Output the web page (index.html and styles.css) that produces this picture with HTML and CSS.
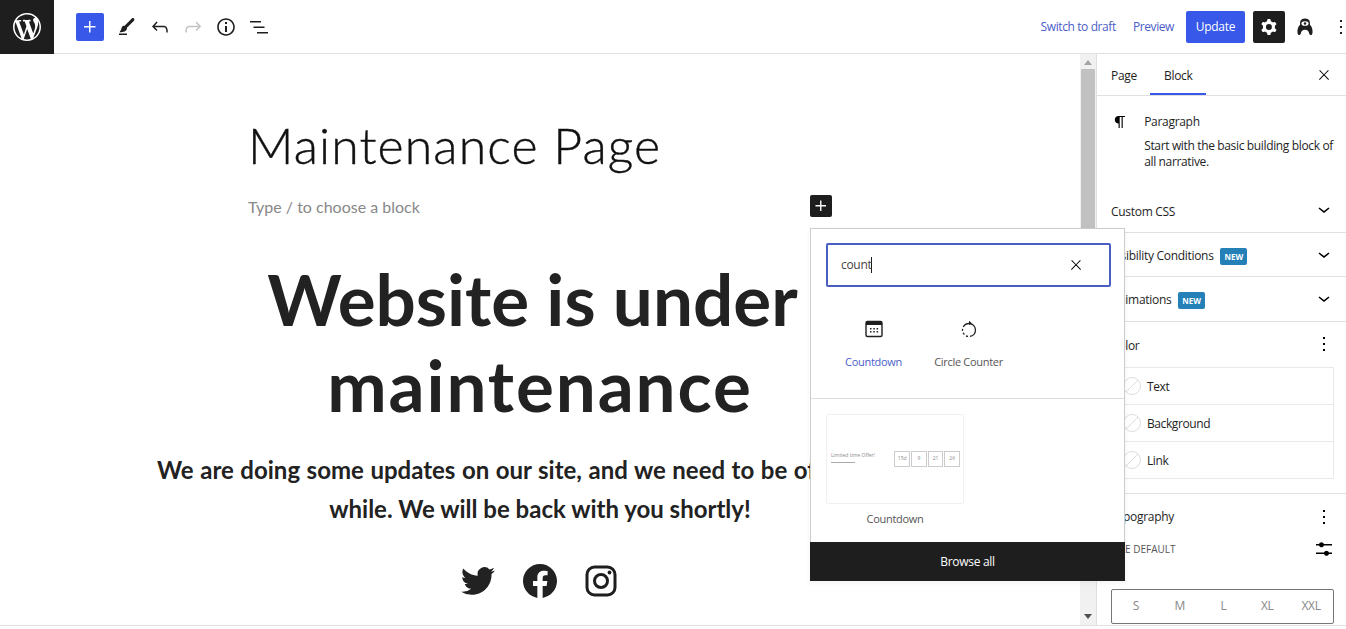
FILE: index.html
```html
<!DOCTYPE html>
<html lang="en">
<head>
    <meta charset="UTF-8">
    <meta name="viewport" content="width=device-width, initial-scale=1.0">
    <title>Edit Page - Maintenance Page</title>
    <link rel="stylesheet" href="styles.css">
</head>
<body>
    <div class="app">
        <header class="topbar">
            <div class="wp-logo">
                <svg width="28" height="28" viewBox="0 0 20 20"><path fill="#fff" d="M20 10c0-5.51-4.49-10-10-10C4.48 0 0 4.49 0 10c0 5.52 4.48 10 10 10 5.51 0 10-4.48 10-10zM7.78 15.37L4.37 6.22c.55-.02 1.17-.08 1.17-.08.5-.06.44-1.13-.06-1.11 0 0-1.45.11-2.37.11-.18 0-.37 0-.58-.01C4.12 2.69 6.87 1.11 10 1.11c2.33 0 4.45.87 6.05 2.34-.68-.11-1.65.39-1.65 1.58 0 .74.45 1.36.9 2.1.35.61.55 1.36.55 2.46 0 1.49-1.4 5-1.4 5l-3.03-8.37c.54-.02.82-.17.82-.17.5-.05.44-1.25-.06-1.22 0 0-1.44.12-2.38.12-.87 0-2.33-.12-2.33-.12-.5-.03-.56 1.2-.06 1.22l.92.08 1.26 3.41zM17.41 10c.24-.64.74-1.87.43-4.25.7 1.29 1.05 2.71 1.05 4.25 0 3.29-1.73 6.24-4.4 7.78.97-2.59 1.94-5.2 2.92-7.78zM6.1 18.09C3.12 16.65 1.11 13.53 1.11 10c0-1.3.23-2.48.72-3.59C3.25 10.3 4.67 14.2 6.1 18.09zm4.03-6.63l2.58 6.98c-.86.29-1.76.45-2.71.45-.79 0-1.57-.11-2.29-.33.81-2.38 1.62-4.74 2.42-7.1z"/></svg>
            </div>
            <div class="tools">
                <button class="add-btn">
                    <svg width="24" height="24" viewBox="0 0 24 24"><path fill="#fff" d="M11 12.5V17.5H12.5V12.5H17.5V11H12.5V6H11V11H6V12.5H11Z"/></svg>
                </button>
                <svg class="tool" width="24" height="24" viewBox="0 0 24 24"><path d="M4 20h8v-1.5H4V20zM18.9 3.5c-.6-.6-1.5-.6-2.1 0l-7.2 7.2c-.4-.1-.7 0-1.1.1-.5.2-1.5.7-1.9 2.2-.4 1.7-.8 2.2-1.1 2.7-.1.1-.2.3-.3.4l-.6 1.1H6c2 0 3.4-.4 4.7-1.4.8-.6 1.2-1.4 1.3-2.3 0-.3 0-.5-.1-.7L19 5.7c.5-.6.5-1.6-.1-2.2z"/></svg>
                <svg class="tool" width="24" height="24" viewBox="0 0 24 24"><path d="M18.3 11.7c-.6-.6-1.4-.9-2.3-.9H6.7l2.9-3.3-1.1-1-4.5 5L8.5 16l1-1-2.7-2.7H16c.5 0 .9.2 1.3.5 1 1 1 3.4 1 4.5v.3h1.5v-.2c0-1.5 0-4.3-1.5-5.7z"/></svg>
                <svg class="tool disabled" width="24" height="24" viewBox="0 0 24 24"><path d="M15.6 6.5l-1.1 1 2.9 3.3H8c-.9 0-1.7.3-2.3.9-1.4 1.5-1.4 4.2-1.4 5.6v.2h1.5v-.3c0-1.1 0-3.5 1-4.5.3-.3.7-.5 1.3-.5h9.2L14.5 15l1.1 1.1 4.6-4.6-4.6-5z"/></svg>
                <svg class="tool" width="24" height="24" viewBox="0 0 24 24"><path d="M12 3.2c-4.8 0-8.8 3.9-8.8 8.8 0 4.8 3.9 8.8 8.8 8.8 4.8 0 8.8-3.9 8.8-8.8 0-4.8-4-8.8-8.8-8.8zm0 16c-4 0-7.2-3.3-7.2-7.2C4.8 8 8 4.8 12 4.8s7.2 3.3 7.2 7.2c0 4-3.2 7.2-7.2 7.2zM11 17h2v-6h-2v6zm0-8h2V7h-2v2z"/></svg>
                <svg class="tool" width="24" height="24" viewBox="0 0 24 24"><path d="M3 6h11v1.5H3V6zm3.5 5.5h11V13h-11v-1.5zM21 17H10v1.5h11V17z"/></svg>
            </div>
            <div class="actions">
                <a class="link-btn">Switch to draft</a>
                <a class="link-btn">Preview</a>
                <button class="update-btn">Update</button>
                <button class="settings-btn">
                    <svg width="24" height="24" viewBox="0 0 24 24"><path fill="#fff" fill-rule="evenodd" d="M10.289 4.836A1 1 0 0111.275 4h1.306a1 1 0 01.987.836l.244 1.466c.787.26 1.503.679 2.108 1.218l1.393-.522a1 1 0 011.216.437l.653 1.13a1 1 0 01-.23 1.273l-1.148.944a6.025 6.025 0 010 2.435l1.149.946a1 1 0 01.23 1.272l-.653 1.13a1 1 0 01-1.216.437l-1.394-.522c-.605.54-1.32.958-2.108 1.218l-.244 1.466a1 1 0 01-.987.836h-1.306a1 1 0 01-.986-.836l-.244-1.466a5.995 5.995 0 01-2.108-1.218l-1.394.522a1 1 0 01-1.217-.436l-.653-1.131a1 1 0 01.23-1.272l1.149-.946a6.026 6.026 0 010-2.435l-1.148-.944a1 1 0 01-.23-1.272l.653-1.131a1 1 0 011.217-.437l1.393.522a5.994 5.994 0 012.108-1.218l.244-1.466zM14.929 12a3 3 0 11-6 0 3 3 0 016 0z"/></svg>
                </button>
                <svg class="avatar" width="16" height="18" viewBox="0 0 18 20">
                    <path fill="#1e1e1e" d="M3.500 7.500V5C3.500 2 6 .5 9 .5s5.500 1.500 5.500 4.500v2.500c2 1.500 3 4.500 3 8 0 2-.8 3.500-2 3.500s-1.800-1-2-2.500c-.2-2-1.800-3.500-4.500-3.500s-4.300 1.500-4.500 3.500c-.2 1.500-.8 2.500-2 2.500s-2-1.500-2-3.500c0-3.500 1-6.500 3-8z"/>
                    <ellipse cx="9" cy="6" rx="4" ry="2.600" fill="#fff"/>
                    <circle cx="9" cy="6" r="1.400" fill="#1e1e1e"/>
                </svg>
                <svg class="tool more" width="24" height="24" viewBox="0 0 24 24"><path d="M13 19h-2v-2h2v2zm0-6h-2v-2h2v2zm0-6h-2V5h2v2z"/></svg>
            </div>
        </header>

        <div class="main">
            <section class="canvas">
                <h1 class="page-title">Maintenance Page</h1>
                <p class="placeholder">Type / to choose a block</p>
                <h2 class="hero">
                    <span class="hero-first">Website is under</span>
                    <span class="hero-second">maintenance</span>
                </h2>
                <p class="lead">We are doing some updates on our site, and we need to be offline for a while. We will be back with you shortly!</p>
                <div class="social">
                    <svg width="34" height="34" viewBox="0 0 24 24"><path d="M23.953 4.570a10 10 0 01-2.825.775 4.958 4.958 0 002.163-2.723c-.951.555-2.005.959-3.127 1.184a4.920 4.920 0 00-8.384 4.482C7.690 8.095 4.067 6.130 1.640 3.162a4.822 4.822 0 00-.666 2.475c0 1.710.870 3.213 2.188 4.096a4.904 4.904 0 01-2.228-.616v.060a4.923 4.923 0 003.946 4.827 4.996 4.996 0 01-2.212.085 4.936 4.936 0 004.604 3.417 9.867 9.867 0 01-6.102 2.105c-.390 0-.779-.023-1.170-.067a13.995 13.995 0 007.557 2.209c9.053 0 13.998-7.496 13.998-13.985 0-.210 0-.420-.015-.630A9.935 9.935 0 0024 4.590z"/></svg>
                    <svg width="34" height="34" viewBox="0 0 24 24"><path d="M24 12.073c0-6.627-5.373-12-12-12s-12 5.373-12 12c0 5.990 4.388 10.954 10.125 11.854v-8.385H7.078v-3.470h3.047V9.430c0-3.007 1.792-4.669 4.533-4.669 1.312 0 2.686.235 2.686.235v2.953H15.830c-1.491 0-1.956.925-1.956 1.874v2.250h3.328l-.532 3.470h-2.796v8.385C19.612 23.027 24 18.062 24 12.073z"/></svg>
                    <svg width="32" height="32" viewBox="0 0 32 32"><rect x="2" y="2" width="28" height="28" rx="7.500" fill="none" stroke="#1e1e1e" stroke-width="3"/><circle cx="16" cy="16" r="6.500" fill="none" stroke="#1e1e1e" stroke-width="3"/><circle cx="24.500" cy="7.500" r="1.900" fill="#1e1e1e"/></svg>
                </div>
            </section>

            <div class="scrollbar">
                <span class="arrow-up"></span>
                <div class="scroll-thumb"></div>
                <span class="arrow-down"></span>
            </div>

            <aside class="sidebar">
                <div class="tabs">
                    <span class="tab">Page</span>
                    <span class="tab active">Block</span>
                    <svg class="tabs-close" width="16" height="16" viewBox="0 0 24 24"><path d="M13 11.800l6.100-6.300-1-1-6.100 6.200-6.100-6.200-1 1 6.100 6.300-6.500 6.700 1 1 6.500-6.600 6.500 6.600 1-1z"/></svg>
                </div>
                <div class="block-card">
                    <svg width="24" height="24" viewBox="0 0 24 24"><path d="m9.996 14v-.225l.004.000v6.225h1.500v-14.500h2.500v14.500h1.500v-14.500h3v-1.500h-8.504c-2.761 0-5 2.239-5 5 0 2.761 2.239 5 5 5z"/></svg>
                    <div>
                        <div class="block-name">Paragraph</div>
                        <p class="block-desc">Start with the basic building block of all narrative.</p>
                    </div>
                </div>
                <div class="panel-row">
                    <span>Custom CSS</span>
                    <svg class="chev" width="24" height="24" viewBox="0 0 24 24"><path d="M17.500 9.600L12 14l-5.500-4.400.9-1.200L12 12l4.500-3.600 1 1.200z"/></svg>
                </div>
                <div class="panel-row">
                    <span>Visibility Conditions <em class="badge">NEW</em></span>
                    <svg class="chev" width="24" height="24" viewBox="0 0 24 24"><path d="M17.500 9.600L12 14l-5.500-4.400.9-1.200L12 12l4.500-3.600 1 1.200z"/></svg>
                </div>
                <div class="panel-row">
                    <span>Animations <em class="badge">NEW</em></span>
                    <svg class="chev" width="24" height="24" viewBox="0 0 24 24"><path d="M17.500 9.600L12 14l-5.500-4.400.9-1.200L12 12l4.500-3.600 1 1.200z"/></svg>
                </div>
                <div class="panel color-panel">
                    <div class="panel-head">
                        <span>Color</span>
                        <svg width="24" height="24" viewBox="0 0 24 24"><path d="M13 19h-2v-2h2v2zm0-6h-2v-2h2v2zm0-6h-2V5h2v2z"/></svg>
                    </div>
                    <div class="color-list">
                        <div class="color-item"><span class="swatch"></span>Text</div>
                        <div class="color-item"><span class="swatch"></span>Background</div>
                        <div class="color-item"><span class="swatch"></span>Link</div>
                    </div>
                </div>
                <div class="panel type-panel">
                    <div class="panel-head">
                        <span>Typography</span>
                        <svg width="24" height="24" viewBox="0 0 24 24"><path d="M13 19h-2v-2h2v2zm0-6h-2v-2h2v2zm0-6h-2V5h2v2z"/></svg>
                    </div>
                    <div class="size-head">
                        <span>SIZE DEFAULT</span>
                        <svg width="24" height="24" viewBox="0 0 24 24"><path d="M14.500 13.800c-1.100 0-2.100.7-2.400 1.800H4V17h8.100c.3 1 1.300 1.800 2.400 1.800s2.100-.7 2.400-1.800H20v-1.500h-3.100c-.3-1-1.300-1.700-2.400-1.700zM11.900 7c-.3-1-1.300-1.800-2.400-1.800S7.400 6 7.100 7H4v1.500h3.100c.3 1 1.300 1.800 2.400 1.800s2.100-.7 2.400-1.800H20V7h-8.100z"/></svg>
                    </div>
                    <div class="size-picker">
                        <span>S</span><span>M</span><span>L</span><span>XL</span><span>XXL</span>
                    </div>
                </div>
            </aside>

            <button class="inline-add">
                <svg width="22" height="22" viewBox="0 0 24 24"><path fill="#fff" d="M11 12.500V17.500H12.500V12.500H17.500V11H12.500V6H11V11H6V12.500H11Z"/></svg>
            </button>

            <div class="inserter">
                <div class="search-wrap">
                    <div class="search-box">
                        <span class="search-text">count</span>
                        <svg width="16" height="16" viewBox="0 0 24 24"><path d="M13 11.800l6.100-6.300-1-1-6.100 6.200-6.100-6.200-1 1 6.100 6.300-6.500 6.700 1 1 6.500-6.600 6.500 6.600 1-1z"/></svg>
                    </div>
                </div>
                <div class="results">
                    <div class="result selected">
                        <svg width="20" height="20" viewBox="0 0 20 20">
                            <rect x="2" y="2.500" width="16" height="15" rx="1.500" fill="none" stroke="#1e1e1e" stroke-width="1.400"/>
                            <rect x="2" y="2.500" width="16" height="3.500" fill="#1e1e1e"/>
                            <path d="M6 9h1.500v1.500H6zM9.300 9h1.500v1.500H9.300zM12.600 9h1.500v1.500h-1.500zM6 12h1.500v1.500H6zM9.300 12h1.500v1.500H9.300zM12.600 12h1.500v1.500h-1.500z" fill="#1e1e1e"/>
                        </svg>
                        <span>Countdown</span>
                    </div>
                    <div class="result">
                        <svg width="20" height="20" viewBox="0 0 20 20">
                            <circle cx="10" cy="11" r="6.500" fill="none" stroke="#1e1e1e" stroke-width="1.300" stroke-dasharray="9 2 2 2 2 2 2 2 18"/>
                            <path d="M10 1.800l2.600 2.200-2.600 2.200z" fill="#1e1e1e"/>
                        </svg>
                        <span>Circle Counter</span>
                    </div>
                </div>
                <div class="patterns">
                    <div class="pattern-thumb">
                        <div class="thumb-offer">
                            <span>Limited time Offer!</span>
                            <i></i>
                        </div>
                        <div class="thumb-cell">15d</div>
                        <div class="thumb-cell">9</div>
                        <div class="thumb-cell">21</div>
                        <div class="thumb-cell">26</div>
                    </div>
                    <div class="pattern-name">Countdown</div>
                </div>
                <div class="browse-all">Browse all</div>
            </div>
        </div>
    </div>
</body>
</html>
```

FILE: styles.css
```css
* {
    box-sizing: border-box;
}

html, body {
    height: 100%;
}

body {
    margin: 0;
    overflow: hidden;
    background: #fff;
    color: #1e1e1e;
    font-family: "Open Sans", "Noto Sans", sans-serif;
    font-size: 12px;
    letter-spacing: -0.3px;
}

button {
    border: none;
    padding: 0;
    font-family: inherit;
    letter-spacing: inherit;
}

.app {
    height: 626px;
    display: flex;
    flex-direction: column;
    border-bottom: 1px solid #e0e0e0;
}

/* top bar */
.topbar {
    height: 54px;
    flex: none;
    display: flex;
    align-items: center;
    border-bottom: 1px solid #e0e0e0;
}

.wp-logo {
    width: 54px;
    height: 54px;
    background: #1e1e1e;
    display: flex;
    align-items: center;
    justify-content: center;
}

.tools {
    display: flex;
    align-items: center;
    gap: 9px;
    margin-left: 22px;
}

.add-btn {
    width: 28px;
    height: 28px;
    background: #3858e9;
    border-radius: 2px;
    display: flex;
    align-items: center;
    justify-content: center;
    margin-right: 2px;
}

.tool {
    fill: #1e1e1e;
    display: block;
}

.tool.disabled {
    fill: #c4c4c4;
}

.actions {
    margin-left: auto;
    display: flex;
    align-items: center;
}

.link-btn {
    color: #4a5dc9;
    letter-spacing: -0.4px;
    margin-right: 17px;
}

.link-btn + .link-btn {
    margin-right: 12px;
}

.update-btn {
    width: 59px;
    height: 32px;
    background: #3858e9;
    color: #fff;
    border-radius: 2px;
    font-size: 12px;
    margin-right: 8px;
}

.settings-btn {
    width: 32px;
    height: 32px;
    background: #1e1e1e;
    border-radius: 2px;
    display: flex;
    align-items: center;
    justify-content: center;
}

.avatar {
    margin-left: 12px;
}

.more {
    margin-left: 16px;
    margin-right: -7px;
}

/* main area */
.main {
    flex: 1;
    display: flex;
    position: relative;
    min-height: 0;
}

.canvas {
    flex: 1;
    min-width: 0;
    overflow: hidden;
    text-align: center;
    font-family: "Lato", sans-serif;
    letter-spacing: 0;
    color: #222;
}

.page-title {
    margin: 58px 0 0 248px;
    font-size: 50px;
    line-height: 66px;
    font-weight: 300;
    letter-spacing: 1.1px;
    -webkit-text-stroke: 0.4px #111;
    text-align: left;
    color: #111;
}

.placeholder {
    margin: 17px 0 0 248px;
    font-size: 16px;
    line-height: 24px;
    text-align: left;
    color: #888;
}

.hero {
    margin: 37px auto 0;
    width: 600px;
    font-size: 71px;
    line-height: 86px;
    font-weight: 700;
}

.hero-first,
.hero-second {
    display: block;
}

.hero-first {
    margin-left: -15px;
}

.hero-second {
    letter-spacing: 1.9px;
}

.lead {
    margin: 22px auto 0;
    width: 780px;
    font-size: 24px;
    line-height: 39px;
    font-weight: 700;
    text-indent: -5px;
}

.lead::first-line {
    word-spacing: 0.7px;
}

.social {
    margin-top: 36px;
    padding-right: 2px;
    display: flex;
    justify-content: center;
    align-items: center;
    gap: 28px;
}

.social svg {
    fill: #222;
}

.scrollbar {
    width: 16px;
    flex: none;
    background: #f1f1f1;
    display: flex;
    flex-direction: column;
    align-items: center;
    justify-content: space-between;
    padding: 6px 0;
}

.scroll-thumb {
    flex: 1;
    width: 14px;
    margin: 4px 0 40px;
    background: #c1c1c1;
}

.arrow-up {
    border: 4px solid transparent;
    border-top: none;
    border-bottom: 5px solid #a3a3a3;
}

.arrow-down {
    border: 4px solid transparent;
    border-bottom: none;
    border-top: 5px solid #505050;
}

/* sidebar */
.sidebar {
    width: 250px;
    flex: none;
    border-left: 1px solid #e0e0e0;
    overflow: hidden;
}

.tabs {
    height: 42px;
    display: flex;
    align-items: stretch;
    padding: 1px 0 0 14px;
    border-bottom: 1px solid #e0e0e0;
}

.tab {
    display: flex;
    align-items: center;
    margin-right: 27px;
    padding: 0;
}

.tab.active {
    margin-left: -14px;
    padding: 0 13px 0 14px;
    box-shadow: inset 0 -2px 0 #3858e9;
}

.tabs-close {
    margin: auto 14px auto auto;
}

.block-card {
    height: 92px;
    display: flex;
    gap: 15px;
    padding: 14px 8px 0 14px;
}

.block-name {
    font-weight: 500;
    line-height: 24px;
}

.block-desc {
    margin: 4px 0 0;
    line-height: 16px;
    letter-spacing: -0.35px;
}

.panel-row {
    height: 44.5px;
    display: flex;
    align-items: center;
    justify-content: space-between;
    padding: 3px 10px 0 14px;
    border-bottom: 1px solid #e0e0e0;
    font-weight: 500;
}

.badge {
    display: inline-block;
    margin-left: 4px;
    padding: 0 4px;
    background: #2580b8;
    color: #fff;
    border-radius: 2px;
    font-size: 8px;
    font-style: normal;
    font-weight: 700;
    letter-spacing: 0;
    line-height: 17px;
    vertical-align: 0;
}

.panel {
    padding: 0 12px 0 14px;
    border-bottom: 1px solid #e0e0e0;
}

.panel-head {
    height: 45px;
    display: flex;
    align-items: center;
    justify-content: space-between;
    font-weight: 500;
    margin-right: -2px;
}

.color-panel .panel-head span {
    margin-top: 2px;
}

.color-panel {
    height: 172px;
}

.color-list {
    height: 112px;
    display: flex;
    flex-direction: column;
    border: 1px solid #e9e9e9;
}

.color-item {
    flex: 1;
    display: flex;
    align-items: center;
    gap: 6px;
    padding: 2px 0 0 11px;
    border-bottom: 1px solid #e9e9e9;
    letter-spacing: -0.4px;
}

.color-item:last-child {
    border-bottom: none;
}

.swatch {
    width: 18px;
    height: 18px;
    margin-top: -2px;
    border-radius: 50%;
    border: 1px solid #ddd;
    background: linear-gradient(-45deg, transparent 47%, #ddd 47%, #ddd 53%, transparent 53%);
}

.type-panel {
    border-bottom: none;
}

.type-panel .panel-head {
    height: 48px;
    padding-bottom: 2px;
}

.size-head {
    height: 16px;
    margin: 0 -2px 0 0;
    padding-bottom: 2px;
    display: flex;
    align-items: center;
    justify-content: space-between;
    font-size: 10px;
    letter-spacing: 0;
    color: #555;
}

.size-picker {
    margin-top: 31.5px;
    height: 35px;
    padding: 0 0 2px 2px;
    display: flex;
    align-items: center;
    border: 1px solid #757575;
    border-radius: 2px;
    color: #8a8a8a;
}

.size-picker span {
    flex: 1;
    text-align: center;
}

/* block inserter popover */
.inline-add {
    position: absolute;
    left: 810px;
    top: 141px;
    width: 22px;
    height: 22px;
    background: #1e1e1e;
    border-radius: 2px;
}

.inline-add svg {
    display: block;
}

.inserter {
    position: absolute;
    left: 810px;
    top: 174px;
    width: 315px;
    height: 353px;
    background: #fff;
    border: 1px solid #ccc;
    border-bottom: none;
    box-shadow: 0 2px 6px rgba(0, 0, 0, 0.05);
    display: flex;
    flex-direction: column;
}

.search-wrap {
    padding: 14px 13px 0 15px;
}

.search-box {
    height: 44px;
    display: flex;
    align-items: center;
    justify-content: space-between;
    padding: 0 25px 0 13px;
    border: 2px solid #4a5dc0;
    border-radius: 2px;
}

.search-text {
    border-right: 1px solid #1e1e1e;
    line-height: 16px;
    color: #444;
}

.results {
    height: 112px;
    display: flex;
    padding: 32px 0 0 15px;
    border-bottom: 1px solid #ddd;
}

.result {
    width: 95px;
    display: flex;
    flex-direction: column;
    align-items: center;
    gap: 15px;
    font-size: 11px;
    color: #555;
    white-space: nowrap;
}

.result.selected {
    color: #4a5dc9;
}

.patterns {
    flex: 1;
    padding: 15px;
}

.pattern-thumb {
    width: 138px;
    height: 90px;
    border: 1px solid #f0f0f0;
    border-radius: 2px;
    display: flex;
    align-items: center;
    padding: 0 3px 0 4px;
    gap: 1px;
    font-size: 5px;
    letter-spacing: 0;
    color: #888;
}

.thumb-offer {
    width: 64px;
    margin-top: -4px;
}

.thumb-offer span {
    white-space: nowrap;
}

.thumb-offer i {
    display: block;
    width: 24px;
    height: 1px;
    margin-top: 4px;
    background: #aaa;
}

.thumb-cell {
    width: 16px;
    height: 16px;
    border: 1px solid #ccc;
    text-align: center;
    line-height: 12px;
}

.pattern-name {
    width: 138px;
    margin-top: 7px;
    text-align: center;
    font-size: 11px;
    color: #555;
}

.browse-all {
    height: 39px;
    margin: 0 -1px;
    flex: none;
    background: #1e1e1e;
    color: #fff;
    display: flex;
    align-items: center;
    justify-content: center;
    font-weight: 500;
}
```
